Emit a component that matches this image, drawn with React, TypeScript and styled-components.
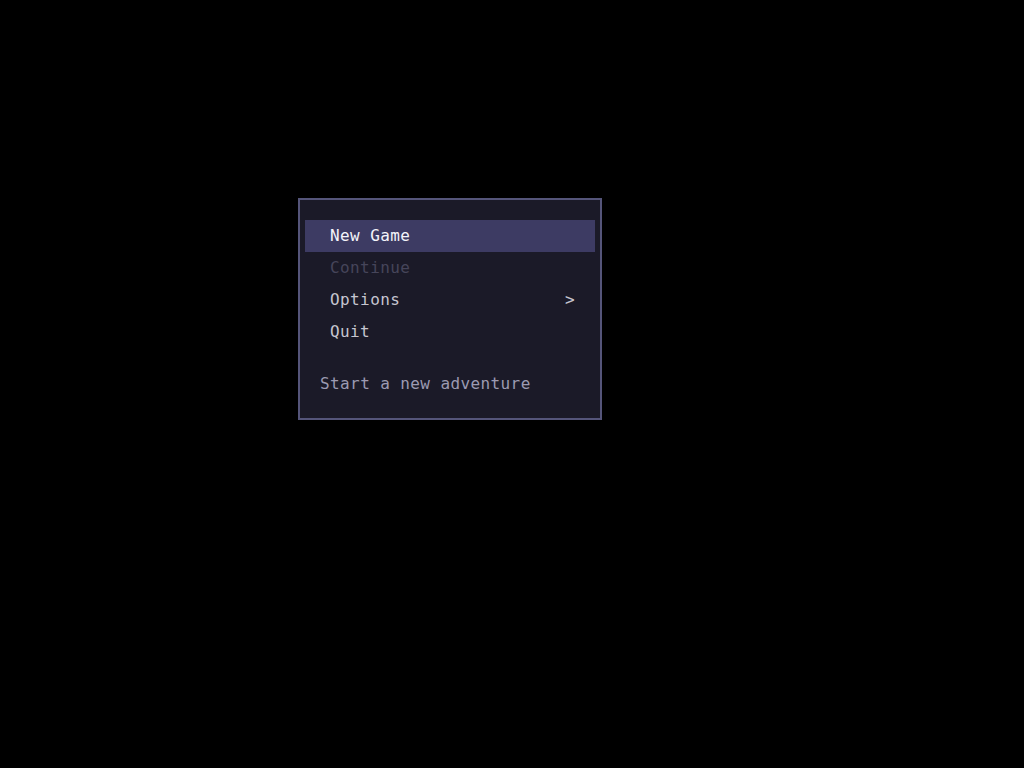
import React from 'react';
import styled, { createGlobalStyle } from 'styled-components';

const GlobalStyle = createGlobalStyle`
  html, body {
    margin: 0;
    padding: 0;
    background: #000;
  }
  body {
    font-family: "DejaVu Sans Mono", monospace;
  }
`;

const Screen = styled.div`
  width: 1024px;
  height: 768px;
  background: #000;
  padding: 198px 0 0 298px;
  box-sizing: border-box;
`;

const Panel = styled.div`
  width: 304px;
  box-sizing: border-box;
  background: #1b1a28;
  border: 2px solid #55557a;
  padding: 20px 0 23px;
`;

const MenuList = styled.ul`
  list-style: none;
  margin: 0;
  padding: 0 5px;
`;

const MenuItem = styled.li<{ $selected?: boolean; $disabled?: boolean }>`
  display: flex;
  align-items: center;
  justify-content: space-between;
  box-sizing: border-box;
  height: 32px;
  padding: 0 20px 2px 25px;
  font-size: 16px;
  letter-spacing: 0.4px;
  background: ${(p) => (p.$selected ? '#3d3b63' : 'transparent')};
  color: ${(p) => (p.$selected ? '#f4f4fa' : p.$disabled ? '#46455a' : '#c6c5d0')};
`;

const Arrow = styled.span`
  color: #c6c5d0;
`;

const Description = styled.p`
  margin: 25px 0 0;
  padding: 0 20px;
  height: 22px;
  line-height: 22px;
  font-size: 16px;
  letter-spacing: 0.4px;
  color: #9c9ab2;
`;

const items = [
  { label: 'New Game', selected: true },
  { label: 'Continue', disabled: true },
  { label: 'Options', submenu: true },
  { label: 'Quit' },
];

export default function App() {
  return (
    <>
      <GlobalStyle />
      <Screen>
        <Panel>
          <MenuList>
            {items.map((item) => (
              <MenuItem key={item.label} $selected={item.selected} $disabled={item.disabled}>
                <span>{item.label}</span>
                {item.submenu && <Arrow>&gt;</Arrow>}
              </MenuItem>
            ))}
          </MenuList>
          <Description>Start a new adventure</Description>
        </Panel>
      </Screen>
    </>
  );
}
